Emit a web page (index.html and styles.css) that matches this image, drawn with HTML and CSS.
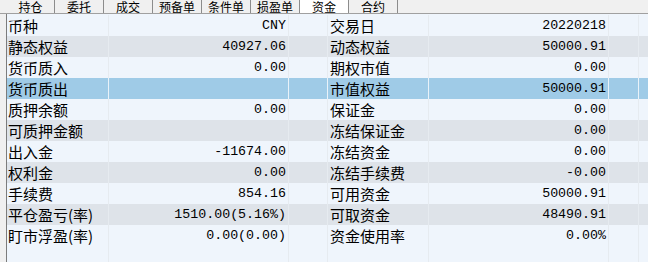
FILE: index.html
```html
<!DOCTYPE html>
<html lang="zh-CN">
<head>
    <meta charset="UTF-8">
    <link rel="stylesheet" href="styles.css">
    <title>资金</title>
</head>
<body>
    <div class="tab-bar">
        <span class="tab first">持仓</span>
        <span class="tab">委托</span>
        <span class="tab">成交</span>
        <span class="tab">预备单</span>
        <span class="tab">条件单</span>
        <span class="tab">损盈单</span>
        <span class="tab active">资金</span>
        <span class="tab">合约</span>
    </div>
    <div class="panel">
        <div class="gutter"></div>
        <div class="table">
            <div class="row">
                <span class="label">币种</span><span class="value">CNY</span><span class="blank"></span>
                <span class="label">交易日</span><span class="value">20220218</span><span class="blank"></span><span class="rest"></span>
            </div>
            <div class="row alt">
                <span class="label">静态权益</span><span class="value">40927.06</span><span class="blank"></span>
                <span class="label">动态权益</span><span class="value">50000.91</span><span class="blank"></span><span class="rest"></span>
            </div>
            <div class="row">
                <span class="label">货币质入</span><span class="value">0.00</span><span class="blank"></span>
                <span class="label">期权市值</span><span class="value">0.00</span><span class="blank"></span><span class="rest"></span>
            </div>
            <div class="row selected">
                <span class="label">货币质出</span><span class="value"></span><span class="blank"></span>
                <span class="label">市值权益</span><span class="value">50000.91</span><span class="blank"></span><span class="rest"></span>
            </div>
            <div class="row">
                <span class="label">质押余额</span><span class="value">0.00</span><span class="blank"></span>
                <span class="label">保证金</span><span class="value">0.00</span><span class="blank"></span><span class="rest"></span>
            </div>
            <div class="row alt">
                <span class="label">可质押金额</span><span class="value"></span><span class="blank"></span>
                <span class="label">冻结保证金</span><span class="value">0.00</span><span class="blank"></span><span class="rest"></span>
            </div>
            <div class="row">
                <span class="label">出入金</span><span class="value">-11674.00</span><span class="blank"></span>
                <span class="label">冻结资金</span><span class="value">0.00</span><span class="blank"></span><span class="rest"></span>
            </div>
            <div class="row alt">
                <span class="label">权利金</span><span class="value">0.00</span><span class="blank"></span>
                <span class="label">冻结手续费</span><span class="value">-0.00</span><span class="blank"></span><span class="rest"></span>
            </div>
            <div class="row">
                <span class="label">手续费</span><span class="value">854.16</span><span class="blank"></span>
                <span class="label">可用资金</span><span class="value">50000.91</span><span class="blank"></span><span class="rest"></span>
            </div>
            <div class="row alt">
                <span class="label">平仓盈亏(率)</span><span class="value">1510.00(5.16%)</span><span class="blank"></span>
                <span class="label">可取资金</span><span class="value">48490.91</span><span class="blank"></span><span class="rest"></span>
            </div>
            <div class="row">
                <span class="label">盯市浮盈(率)</span><span class="value">0.00(0.00)</span><span class="blank"></span>
                <span class="label">资金使用率</span><span class="value">0.00%</span><span class="blank"></span><span class="rest"></span>
            </div>
            <div class="row">
                <span class="label"></span><span class="value"></span><span class="blank"></span>
                <span class="label"></span><span class="value"></span><span class="blank"></span><span class="rest"></span>
            </div>
        </div>
    </div>
</body>
</html>
```

FILE: styles.css
```css
body {
    margin: 0;
    padding: 0;
    width: 648px;
    height: 262px;
    overflow: hidden;
    background-color: #f0f0f0;
    font-family: "Noto Sans CJK SC", sans-serif;
    color: #000;
}
.tab-bar {
    display: flex;
    height: 13px;
    border-bottom: 1px solid #a0a0a0;
    background-color: #f0f0f0;
    overflow: hidden;
}
.tab {
    width: 48px;
    border-right: 1px solid #8c8c8c;
    font-size: 12px;
    line-height: 13px;
    text-align: center;
    white-space: nowrap;
}
.tab.first {
    padding-left: 7px;
    box-sizing: border-box;
    width: 55px;
}
.tab.active {
    background-color: #fff;
}
.panel {
    display: flex;
    height: 248px;
}
.gutter {
    width: 6px;
    border-right: 1px solid #7c7c7c;
    background-color: #f0f0f0;
}
.table {
    flex: 1;
    padding-top: 1px;
    background-color: #eff5fc;
}
.row {
    display: grid;
    grid-template-columns: 101px 180px 39px 101px 180px 30px 1fr;
    height: 21px;
    background-color: #eff5fc;
}
.row.alt {
    background-color: #dee3e9;
}
.row.selected {
    background-color: #9fcbe7;
}
.row span {
    line-height: 21px;
    white-space: nowrap;
    overflow: hidden;
}
.label {
    font-size: 15px;
    padding-left: 1px;
}
.row span + span {
    border-left: 1px solid #e6ebf0;
}
.row.selected span + span {
    border-left-color: #e9f2f9;
}
.value {
    font-family: "Liberation Mono", monospace;
    font-size: 13.3px;
    text-align: right;
    padding-right: 2px;
}
.row .blank + .label {
    padding-left: 2px;
}
```
